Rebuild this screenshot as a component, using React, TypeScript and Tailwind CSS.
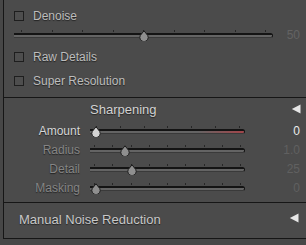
import React from "react";

const font = "font-['Liberation_Sans',Arial,sans-serif]";

type SliderProps = {
  width: number;
  ticks: number;
  tickInset: string;
  pos: number; // 0..1
  light?: boolean;
  red?: boolean;
};

const Thumb = ({ left, light }: { left: number; light?: boolean }) => (
  <svg
    width="11"
    height="11"
    viewBox="0 0 11 11"
    className="absolute top-[0px] -translate-x-1/2"
    style={{ left }}
  >
    <path
      d="M5.5 0.8 L9.3 5.6 A4.2 4.2 0 1 1 1.7 5.6 Z"
      fill={light ? "#d4d4d4" : "#8f8f8f"}
      stroke="#1b1b1b"
      strokeWidth="1"
    />
  </svg>
);

const Slider = ({ width, ticks, tickInset, pos, light, red }: SliderProps) => {
  const inset = 6;
  const left = inset + pos * (width - inset * 2);
  return (
    <div className="relative h-[11px]" style={{ width }}>
      <div className={`flex h-[2px] justify-between ${tickInset}`}>
        {Array.from({ length: ticks }).map((_, i) => (
          <div key={i} className="w-px h-[2px] bg-[#262626]" />
        ))}
      </div>
      <div className="mt-[1px] h-[5px] rounded-r-full border-t-2 border-r border-[#141414] border-b border-b-[#3a3a3a] bg-[#646464] overflow-hidden">
        {red && (
          <div className="h-full w-full bg-[linear-gradient(90deg,#646464_0%,#646464_70%,#a3454a_100%)]" />
        )}
      </div>
      <Thumb left={left} light={light} />
    </div>
  );
};

const Check = ({ label }: { label: string }) => (
  <div className="flex h-[16px] items-center gap-[9px]">
    <div className="w-[10px] h-[10px] border border-[#1e1e1e] bg-[#4e4e4e]" />
    <span className="text-[12px] text-[#bdbdbd] [text-shadow:0_1px_1px_rgba(0,0,0,0.55)]">
      {label}
    </span>
  </div>
);

const Triangle = () => (
  <svg width="10" height="10" viewBox="0 0 10 10">
    <path d="M9.5 0.5 L9.5 9.5 L0.8 5 Z" fill="#e6e6e6" />
  </svg>
);

const rows = [
  { label: "Amount", value: "0", pos: 0, on: true, ticks: 7, inset: "pl-[6px] pr-[5px]" },
  { label: "Radius", value: "1.0", pos: 0.2, on: false, ticks: 9, inset: "px-[4px]" },
  { label: "Detail", value: "25", pos: 0.25, on: false, ticks: 9, inset: "px-[4px]" },
  { label: "Masking", value: "0", pos: 0, on: false, ticks: 9, inset: "px-[4px]" },
];

export default function App() {
  return (
    <div className={`w-[306px] h-[245px] overflow-hidden bg-[#474747] flex ${font}`}>
      <div className="w-[3px] shrink-0" />
      <div className="flex-1 flex flex-col">
        <div className="border-l border-b border-[#161616] bg-[#4b4b4b]">
          {/* Denoise */}
          <div className="h-[98px] border-b border-[#161616] pl-[10px] pt-[8px]">
            <Check label="Denoise" />
            <div className="mt-[3px] flex h-[16px] items-center">
              <Slider width={259} ticks={9} tickInset="px-[7px]" pos={0.5} />
              <span className="ml-auto pr-[6px] text-[12px] text-[#636363]">50</span>
            </div>
            <div className="mt-[6px]">
              <Check label="Raw Details" />
            </div>
            <div className="mt-[8px]">
              <Check label="Super Resolution" />
            </div>
          </div>

          {/* Sharpening */}
          <div className="h-[105px] border-b border-[#161616] pt-[3px] pb-[5px]">
            <div className="flex h-[18px] items-center pl-[86px] pr-[5px]">
              <span className="text-[13px] text-[#d2d2d2] [text-shadow:0_1px_1px_rgba(0,0,0,0.55)]">
                Sharpening
              </span>
              <div className="ml-auto mt-[-2px]">
                <Triangle />
              </div>
            </div>
            <div className="mt-[2px] flex flex-col">
              {rows.map((r) => (
                <div key={r.label} className="flex h-[19px] items-center">
                  <span
                    className={`w-[76px] text-right text-[12px] [text-shadow:0_1px_1px_rgba(0,0,0,0.55)] ${
                      r.on ? "text-[#d6d6d6]" : "text-[#858585]"
                    }`}
                  >
                    {r.label}
                  </span>
                  <div className="ml-[10px] mt-[2px]">
                    <Slider
                      width={155}
                      ticks={r.ticks}
                      tickInset={r.inset}
                      pos={r.pos}
                      light={r.on}
                      red={r.on}
                    />
                  </div>
                  <span
                    className={`ml-auto pr-[6px] text-[12px] ${
                      r.on ? "text-[#ececec]" : "text-[#606060]"
                    }`}
                  >
                    {r.value}
                  </span>
                </div>
              ))}
            </div>
          </div>

          {/* Manual Noise Reduction */}
          <div className="h-[35px] flex items-start pt-[7px] pl-[15px] pr-[7px]">
            <span className="text-[13px] text-[#c8c8c8] [text-shadow:0_1px_1px_rgba(0,0,0,0.55)]">
              Manual Noise Reduction
            </span>
            <div className="ml-auto mt-[3px]">
              <Triangle />
            </div>
          </div>
        </div>
      </div>
    </div>
  );
}
